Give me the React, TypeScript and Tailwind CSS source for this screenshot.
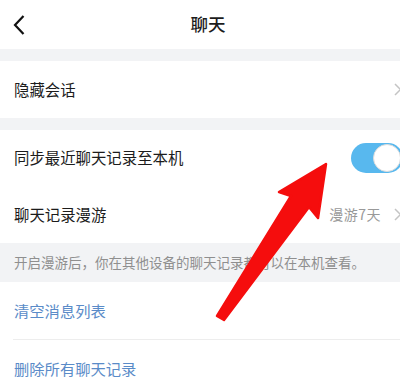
import React from "react";

const Chevron = () => (
  <svg width="8" height="13" viewBox="0 0 8 13" className="shrink-0">
    <path d="M1 1 L6.5 6.5 L1 12" fill="none" stroke="#c4c4c4" strokeWidth="1.5" />
  </svg>
);

export default function App() {
  return (
    <div
      className="relative w-[400px] h-[384px] overflow-hidden bg-[#f2f3f5] text-[#1c1c1c]"
      style={{ fontFamily: '"Noto Sans CJK SC", "Noto Sans", sans-serif' }}
    >
      <div className="h-[49px] bg-white flex items-center relative">
        <svg width="14" height="22" viewBox="0 0 14 22" className="ml-[12px]">
          <path d="M11.5 2 L3 11 L11.5 20" fill="none" stroke="#111" strokeWidth="2.2" />
        </svg>
        <div className="absolute left-0 right-0 top-0 h-full flex items-center justify-center text-[17.5px] font-medium pl-[16px]">
          聊天
        </div>
      </div>
      <div className="h-[12px]" />
      <div className="h-[57px] bg-white flex items-center justify-between pl-[14px] pr-[0px]">
        <span className="text-[15.4px]">隐藏会话</span>
        <div className="-mr-[2px]"><Chevron /></div>
      </div>
      <div className="h-[12px]" />
      <div className="bg-white">
        <div className="h-[56px] flex items-center justify-between pl-[14px]">
          <span className="text-[15.4px]">同步最近聊天记录至本机</span>
          <div className="relative w-[52px] h-[30px] rounded-full bg-[#58b8ee] -mr-[3px] shrink-0">
            <div className="absolute right-[2px] top-[1px] w-[28px] h-[28px] rounded-full bg-white border border-[#dcdcdc]" />
          </div>
        </div>
        <div className="h-[57px] flex items-center justify-between pl-[14px]">
          <span className="text-[15.4px]">聊天记录漫游</span>
          <div className="flex items-center gap-[13px] -mr-[2px]">
            <span className="text-[14px] text-[#999] tracking-[0.5px]">漫游7天</span>
            <Chevron />
          </div>
        </div>
      </div>
      <div className="h-[39px] flex items-center pl-[14px] text-[13.5px] text-[#8f8f8f]">
        开启漫游后，你在其他设备的聊天记录都可以在本机查看。
      </div>
      <div className="bg-white">
        <div className="h-[57px] flex items-center pl-[14px] text-[15.3px] text-[#5a8bc8]">清空消息列表</div>
        <div className="ml-[13px] h-px bg-[#ededed]" />
        <div className="h-[57px] flex items-center pl-[14px] text-[15.3px] text-[#5a8bc8]">删除所有聊天记录</div>
      </div>
      <svg className="absolute left-0 top-0 pointer-events-none" width="400" height="384" viewBox="0 0 400 384">
        <polygon
          points="326,164 279,192 291,196 217,316 224,320 309,207 318,218"
          fill="#f50d0d"
          stroke="#f50d0d"
          strokeWidth="2.5"
          strokeLinejoin="round"
        />
      </svg>
    </div>
  );
}
